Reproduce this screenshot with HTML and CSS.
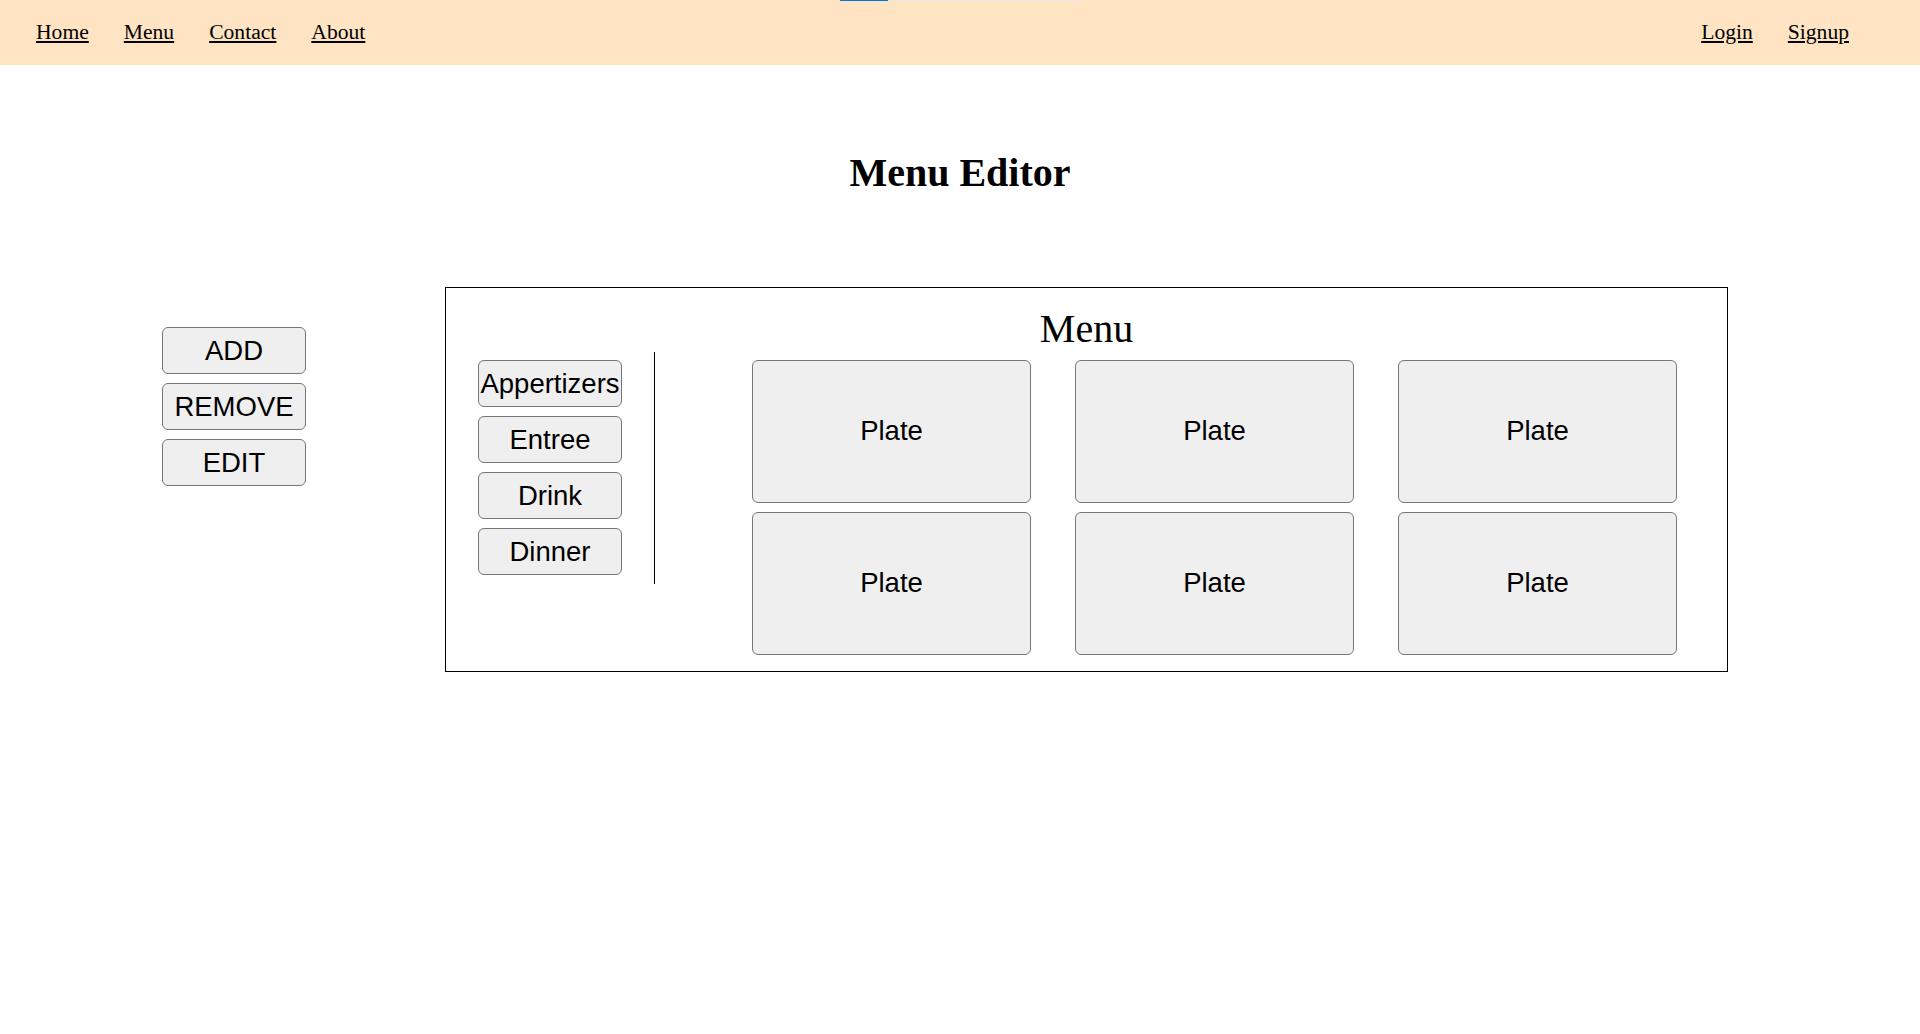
FILE: index.html
```html
<!DOCTYPE html>
<html lang="en">
<head>
<meta charset="utf-8">
<title>Menu Editor</title>
<link rel="stylesheet" href="styles.css">
</head>
<body>
<div class="loadbar"><span class="loadbar-fill"></span></div>
<nav class="topnav">
  <div class="nav-group">
    <a href="#" class="nav-link">Home</a>
    <a href="#" class="nav-link">Menu</a>
    <a href="#" class="nav-link">Contact</a>
    <a href="#" class="nav-link">About</a>
  </div>
  <div class="nav-group">
    <a href="#" class="nav-link">Login</a>
    <a href="#" class="nav-link">Signup</a>
  </div>
</nav>
<main class="page">
  <h1 class="page-title">Menu Editor</h1>
  <div class="editor">
    <div class="actions">
      <button class="btn">ADD</button>
      <button class="btn">REMOVE</button>
      <button class="btn">EDIT</button>
    </div>
    <section class="menu-box">
      <h2 class="menu-title">Menu</h2>
      <div class="menu-body">
        <div class="categories">
          <button class="btn">Appertizers</button>
          <button class="btn">Entree</button>
          <button class="btn">Drink</button>
          <button class="btn">Dinner</button>
        </div>
        <div class="divider"></div>
        <div class="plates">
          <button class="plate">Plate</button>
          <button class="plate">Plate</button>
          <button class="plate">Plate</button>
          <button class="plate">Plate</button>
          <button class="plate">Plate</button>
          <button class="plate">Plate</button>
        </div>
      </div>
    </section>
  </div>
</main>
</body>
</html>
```

FILE: styles.css
```css
html, body {
  margin: 0;
  padding: 0;
  background: #ffffff;
}

body {
  font-family: "Liberation Serif", "Times New Roman", serif;
  color: #000;
}

.loadbar {
  position: absolute;
  top: 0;
  left: 840px;
  width: 240px;
  height: 1px;
  background: #e6e6e6;
  display: flex;
}

.loadbar-fill {
  width: 48px;
  height: 1px;
  background: #0078d7;
}

.topnav {
  height: 65px;
  background: #ffe4c4;
  display: flex;
  align-items: center;
  justify-content: space-between;
  padding: 0 71px 1px 36px;
  box-sizing: border-box;
}

.nav-group {
  display: flex;
  gap: 35px;
}

.nav-link {
  font-size: 21.6px;
  color: #000;
  text-decoration: underline;
}

.page {
  display: flex;
  flex-direction: column;
}

.page-title {
  margin: 86px 0 92px;
  font-size: 40px;
  line-height: 44px;
  font-weight: bold;
  text-align: center;
}

.editor {
  display: flex;
  align-items: flex-start;
  padding-left: 162px;
  gap: 139px;
}

.actions {
  margin-top: 40px;
  display: flex;
  flex-direction: column;
  gap: 9px;
}

.btn {
  width: 144px;
  height: 47px;
  padding: 0;
  box-sizing: border-box;
  background: #efefef;
  border: 1px solid #767676;
  border-radius: 6px;
  font-family: "Liberation Sans", Arial, sans-serif;
  font-size: 27.5px;
  color: #000;
  white-space: nowrap;
  display: flex;
  align-items: center;
  justify-content: center;
  overflow: visible;
}

.menu-box {
  width: 1283px;
  box-sizing: border-box;
  border: 1px solid #000;
  padding: 19px 0 16px 32px;
}

.menu-title {
  margin: 0 0 1px;
  font-size: 40px;
  line-height: 44px;
  font-weight: normal;
  text-align: center;
  padding-right: 32px;
}

.menu-body {
  display: flex;
  align-items: flex-start;
}

.categories {
  margin-top: 8px;
  display: flex;
  flex-direction: column;
  gap: 9px;
}

.divider {
  width: 1px;
  height: 232px;
  background: #000;
  margin-left: 32px;
}

.plates {
  margin-left: 97px;
  margin-top: 8px;
  display: grid;
  grid-template-columns: repeat(3, 279px);
  grid-auto-rows: 143px;
  column-gap: 44px;
  row-gap: 9px;
}

.plate {
  padding: 0 0 2px;
  box-sizing: border-box;
  background: #efefef;
  border: 1px solid #767676;
  border-radius: 6px;
  font-family: "Liberation Sans", Arial, sans-serif;
  font-size: 27.5px;
  color: #000;
}
```
